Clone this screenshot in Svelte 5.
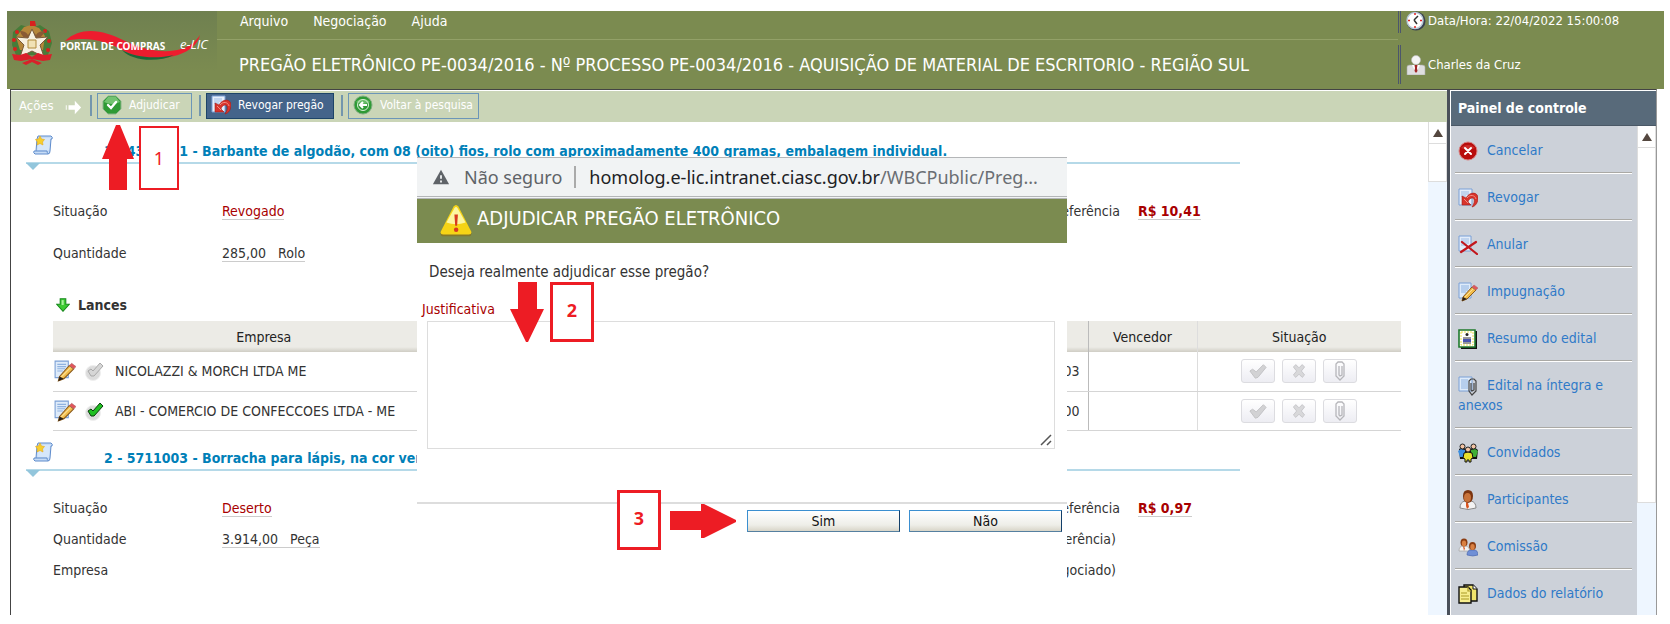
<script>
  const menus = ['Arquivo', 'Negociação', 'Ajuda'];
  const panel = [
    ['cancel', 'Cancelar'],
    ['revoke', 'Revogar'],
    ['annul', 'Anular'],
    ['edit', 'Impugnação'],
    ['summary', 'Resumo do edital'],
    ['attach', 'Edital na íntegra e anexos'],
    ['guests', 'Convidados'],
    ['person', 'Participantes'],
    ['people', 'Comissão'],
    ['report', 'Dados do relatório']
  ];
  const bids = [
    { name: 'NICOLAZZI & MORCH LTDA ME', value: 'R$ 10,03', winner: false },
    { name: 'ABI - COMERCIO DE CONFECCOES LTDA - ME', value: 'R$ 10,00', winner: true }
  ];
  let reason = $state('');
</script>

{#snippet icon(name, size = 20)}
  <svg width={size} height={size} viewBox="0 0 20 20" aria-hidden="true">
    {#if name === 'cancel'}
      <circle cx="10" cy="10" r="9" fill="#b80d0d" stroke="#d98080" />
      <path d="M3 7a8 6 0 0 1 14 0q-7 3-14 0" fill="#d8403a" opacity=".6" />
      <path d="M7 7l6 6M13 7l-6 6" stroke="#fff" stroke-width="2" stroke-linecap="round" />
    {:else if name === 'revoke'}
      <path d="M1 1h13v16H1z" fill="#e6effb" stroke="#7ba0d6" />
      <path d="M3 4h8M3 6h8M3 8h5" stroke="#9dbbe4" />
      <path d="M4 8v9h9l-3-3c1-4 5-5 6-3s0 5-2 8c4-1 6-5 6-9 0-6-8-7-12 0z" fill="#d8342c" stroke="#a41b18" stroke-width=".6" />
      <path d="M9 10c3-4 8-3 9 1M6 11l4 4" fill="none" stroke="#f28d82" />
    {:else if name === 'annul'}
      <path d="M1 1h12v15H1z" fill="#e3edfa" stroke="#7ba0d6" />
      <path d="M3 4h8M3 6h8M3 8h8M3 10h6" stroke="#9dbbe4" />
      <path d="M3 17L18 7M4 7l15 12" stroke="#c2161c" stroke-width="2.2" stroke-linecap="round" />
    {:else if name === 'edit'}
      <path d="M1 1h12v15H1z" fill="#deebfa" stroke="#7ba0d6" />
      <path d="M3 4h8M3 6h8M3 8h7M3 10h5" stroke="#8fb2e0" />
      <path d="M5 15L14 5l4 3-9 9-5 2z" fill="#f2bd4a" stroke="#8a5a1c" />
      <path d="M6.500 15.500L15 7" stroke="#fbe09a" />
      <path d="M4 19l1-4 4 2z" fill="#2b2018" />
      <path d="M14 5l2-2 4 3-2 2z" fill="#e2555a" stroke="#b06a70" stroke-width=".6" />
    {:else if name === 'summary'}
      <path d="M3 2h16v18H3z" fill="#111" />
      <path d="M1 1h16v17H1z" fill="#fff" stroke="#1f7a2c" stroke-width="1.600" />
      <path d="M3 3h12v13H3z" fill="none" stroke="#e9e04a" stroke-dasharray="2 1" />
      <circle cx="9" cy="5.500" r="1.500" fill="#222" />
      <path d="M5 9h8M5 14h8" stroke="#333" />
      <path d="M5 10h8v3H5z" fill="#4a55b0" />
    {:else if name === 'attach'}
      <path d="M1 1h13v14H1z" fill="#deebfa" stroke="#7ba0d6" />
      <path d="M3 4h7M3 6h7M3 8h7M3 10h7M3 12h7" stroke="#8fb2e0" />
      <path d="M11 6v9l3 4 4-4V5l-2-2h-3l-2 2v9M13 7v7l1 1 2-1V7" fill="none" stroke="#444" stroke-width="1.200" />
    {:else if name === 'guests'}
      <path d="M1 6l4-2 3 2 1 10H2zM12 6l4-2 4 3-1 9h-7z" fill="#111" />
      <path d="M0 8l3-2 4 1v7H2z" fill="#3c8fe0" />
      <path d="M13 7l4-1 3 2-2 6h-5z" fill="#3fae35" />
      <circle cx="4.500" cy="3.500" r="2.500" fill="#f3c4a4" stroke="#222" />
      <circle cx="15.500" cy="3.500" r="2.500" fill="#f3c4a4" stroke="#222" />
      <path d="M6 10l4-1 4 1 1 5-2 1v3h-2v-2H9v2H7v-3l-2-1z" fill="#e8e22c" stroke="#111" />
      <circle cx="10" cy="6.500" r="2.500" fill="#f3c4a4" stroke="#222" />
    {:else if name === 'person'}
      <path d="M2 18q0-6 5-7h6q5 1 5 7-8 3-16 0z" fill="#f3f3f3" stroke="#888" />
      <path d="M8 12l2 1 1 4-2 2-1-3z" fill="#d9541e" />
      <path d="M5 6q0-6 5-6t5 6q0 6-5 7-5-1-5-7z" fill="#7c3510" />
      <ellipse cx="9.500" cy="7.500" rx="3.500" ry="4.500" fill="#c9733a" />
    {:else if name === 'people'}
      <path d="M1 14q0-5 4-5h3q3 0 4 5z" fill="#f3f3f3" stroke="#999" stroke-width=".6" />
      <path d="M5 9l1 5 1-3z" fill="#d9541e" />
      <ellipse cx="6" cy="5.500" rx="3.500" ry="4" fill="#8b3d12" />
      <ellipse cx="6" cy="6.500" rx="2.200" ry="3" fill="#d98042" />
      <path d="M9 18q0-5 4-5h3q4 0 4 5-5 2-11 0z" fill="#6f8fd6" stroke="#4560a8" stroke-width=".6" />
      <ellipse cx="14.500" cy="9" rx="3.500" ry="4" fill="#8b3d12" />
      <ellipse cx="14.500" cy="10" rx="2.200" ry="3" fill="#d98042" />
    {:else if name === 'report'}
      <path d="M6 1h9l4 4v12H6z" fill="#efe36c" stroke="#111" stroke-width="1.400" />
      <path d="M15 1v4h4" fill="#fff" stroke="#111" />
      <path d="M1 3h9l3 3v13H1z" fill="#f7ee8e" stroke="#111" stroke-width="1.400" />
      <path d="M10 3v4h3M3 9h6M3 12h8M3 15h8" fill="none" stroke="#a99a26" stroke-width="1.200" />
    {:else if name === 'ok'}
      <path d="M6 1h8l5 5v8l-5 5H6l-5-5V6z" fill="#2f9a35" stroke="#8ab58a" />
      <path d="M6 2h8l4 5q-8 4-16 0z" fill="#8fd48a" opacity=".7" />
      <path d="M6 10l3 3 5-6" fill="none" stroke="#fff" stroke-width="2.400" stroke-linecap="round" />
    {:else if name === 'back'}
      <circle cx="10" cy="10" r="9" fill="#2f9a35" stroke="#7fae80" />
      <path d="M3 7a8 6 0 0 1 14 0q-7 4-14 0" fill="#8fd48a" opacity=".6" />
      <circle cx="10" cy="10" r="5.500" fill="none" stroke="#d9f0d6" />
      <path d="M14 10H7M10 7l-3 3 3 3" fill="none" stroke="#fff" stroke-width="2" />
    {:else if name === 'scroll'}
      <path d="M5 1h13q2 1 1 3h-1L17 16q0 3-2 3H2q-2-1-1-3h2L4 4z" fill="#c7dcf6" stroke="#5f8ccc" />
      <path d="M5.500 3H17l-1 12H4.500z" fill="#d6e7fa" />
      <path d="M3 16h11q0 2 1.500 3" fill="none" stroke="#5f8ccc" />
      <path d="M7 1l1.500 3 3 .5-2 2.500.5 3-3-1.500-3 1.500.5-3-2-2.500 3-.5z" fill="#f7cf2d" stroke="#e6a817" stroke-width=".6" />
    {:else if name === 'clock'}
      <circle cx="10" cy="10" r="9.500" fill="#39414e" />
      <circle cx="9" cy="9.500" r="8" fill="#fff" stroke="#b9cad8" stroke-width="1.500" />
      <path d="M8 9l4-4M8 9l3 4" stroke="#333" stroke-width="1.500" />
      <path d="M9 2v2M9 15v2M2 9.500h2M14 9.500h2" stroke="#e02020" stroke-width="1.500" />
    {:else if name === 'user'}
      <path d="M1 20v-8q0-2 3-2h12q3 0 3 2v8z" fill="#dedee0" stroke="#aaa" stroke-width=".6" />
      <path d="M6 10h8l-4 8z" fill="#fff" />
      <path d="M8.500 10h3l-.5 3 .5 3-1.500 2-1.500-2 .5-3z" fill="#a02525" />
      <circle cx="10" cy="5" r="4.500" fill="#f4f4f4" stroke="#bbb" stroke-width=".6" />
    {:else if name === 'arrow'}
      <path d="M2 8h1v5H2zM5 8h7V3l7 7.500-7 7.500v-5H5z" fill="#fff" />
    {:else if name === 'down'}
      <path d="M6 1h8v8h5l-9 10L1 9h5z" fill="#3ecb34" stroke="#1a8a1e" stroke-width="1.500" />
      <path d="M8 3h3v7H8z" fill="#a9ef9c" />
    {:else if name === 'won' || name === 'lost'}
      <circle cx="9" cy="12" r="7.500" fill="#dcdcdc" stroke="#efefef" />
      <path d="M4 10l3-2 2 2 7-8 3 3-9 10H7z" fill={name === 'won' ? '#1fbf22' : '#d6d6d6'} stroke={name === 'won' ? '#0b3d0c' : '#a9a9a9'} />
    {:else if name === 'gcheck'}
      <path d="M1 10l3-2 4 3 8-8 3 3-9 11-3 1z" fill="#d2d2d4" stroke="#bfbfc2" />
    {:else if name === 'gcross'}
      <path d="M3 5l3-3 4 4 4-4 3 3-4 5 4 5-3 3-4-4-4 4-3-3 4-5z" fill="#d8d8da" stroke="#c0c0c4" />
    {:else if name === 'gclip'}
      <path d="M6 4v11l4 4 4-4V3l-2-2H8L6 3v11M9 5v9l1 1 2-1V5" fill="none" stroke="#b6b6ba" stroke-width="1.300" />
    {:else if name === 'secure'}
      <path d="M10 2l9 16H1z" fill="#5f6368" />
      <path d="M10 8v4M10 14v2" stroke="#f1f3f4" stroke-width="2" />
    {:else if name === 'warning'}
      <path d="M8.500 2q1.500-2.500 3 0L19.500 17q.5 2.500-1.500 2.500H2Q0 19.500.500 17z" fill="#8b6d10" opacity=".6" />
      <path d="M8.500 1q1.500-2 3 0l8 15.500q.5 2-1.500 2H2q-2 0-1.500-2z" fill="#f6d416" />
      <path d="M9 2q1-1.500 2 0l5 9q-6 2-12 0z" fill="#fdf6a0" />
      <path d="M9 6h2.200L10.700 13H9.500z" fill="#d83a20" />
      <circle cx="10.100" cy="15.500" r="1.400" fill="#d83a20" />
    {/if}
  </svg>
{/snippet}

{#snippet up()}
  <span class="up"><svg width="10" height="8" viewBox="0 0 10 8" aria-hidden="true"><path d="M5 0l5 8H0z" fill="#54473f" /></svg></span>
{/snippet}

<div class="page">
  <header>
    <div class="brand">
      <svg width="210" height="78" viewBox="0 0 210 78" role="img" aria-label="Portal de Compras e-LIC">
        <path d="M14 14l-8 7-1 13 4 10h32l4-12-3-12-9-6-8 3z" fill="#3f7a35" opacity=".85" />
        <path d="M17 16l7-2 8 3 6 8-2 14H13L9 26z" fill="#b5863a" />
        <circle cx="10" cy="21" r="2" fill="#d8201e" /><circle cx="38" cy="20" r="2" fill="#d8201e" />
        <circle cx="7" cy="29" r="2" fill="#d8201e" /><circle cx="42" cy="30" r="2" fill="#d8201e" />
        <circle cx="8" cy="38" r="2" fill="#d8201e" /><circle cx="41" cy="39" r="2" fill="#d8201e" />
        <path d="M23 10h5l1 5h-6z" fill="#d8201e" />
        <path d="M13 20q6 0 8 4l4-5 4 5q2-4 9-4-3 7-9 8l-4 3-4-3q-6-1-8-8z" fill="#8a5a34" />
        <path d="M25 18l4 9 12-1-8 8 4 12-12-6-12 6 4-12-8-8 12 1z" fill="#f7f0e0" stroke="#7a5a3a" />
        <path d="M21 29h8v8h-8z" fill="#f1e2b5" stroke="#b08a3a" />
        <path d="M5 43l8 1 6-2 6 4 6-4 6 2 8-1-2 6-7 1-11-2-11 2-7-1z" fill="#d9202a" />
        <path d="M15 52l10-4 10 4-4 2-6-3-6 3z" fill="#d9202a" />
        <path d="M58 30C75 14 98 20 116 29c20 10 42 14 58 9 10-3 15-8 19-14-2 9-10 16-22 20-14 5-38 4-52-3-20-11-36-16-61-11z" fill="#ed1c2e" />
        <path d="M115 39c14 8 34 9 52 5-16 8-43 6-52-5z" fill="#1c6638" />
        <text x="53" y="39" class="brand-name">PORTAL DE COMPRAS</text>
        <text x="173" y="38" class="brand-mark">e-LIC</text>
      </svg>
    </div>
    <div class="titles">
      <nav>
        {#each menus as m}<a href="#menu">{m}</a>{/each}
      </nav>
      <h1>PREGÃO ELETRÔNICO PE-0034/2016 - Nº PROCESSO PE-0034/2016 - AQUISIÇÃO DE MATERIAL DE ESCRITORIO - REGIÃO SUL</h1>
    </div>
    <div class="session">
      <p>{@render icon('clock')}Data/Hora: 22/04/2022 15:00:08</p>
      <p>{@render icon('user')}Charles da Cruz</p>
    </div>
  </header>

  <div class="work">
    <main>
      <div class="toolbar">
        <span class="actions">Ações {@render icon('arrow', 18)}</span>
        <i class="sep"></i>
        <button class="tool adj">{@render icon('ok')}Adjudicar</button>
        <i class="sep"></i>
        <button class="tool dark">{@render icon('revoke')}Revogar pregão</button>
        <i class="sep"></i>
        <button class="tool back">{@render icon('back')}Voltar à pesquisa</button>
      </div>
      <div class="scrollarea">
        <div class="content">
          <section>
            <h2>{@render icon('scroll')}<span>1 - 4310001 - Barbante de algodão, com 08 (oito) fios, rolo com aproximadamente 400 gramas, embalagem individual.</span></h2>
            <dl class="loose">
              <div class="row"><dt>Situação</dt><dd><u class="red">Revogado</u></dd><dt class="ref">Valor de referência</dt><dd><u class="price">R$ 10,41</u></dd></div>
              <div class="row"><dt>Quantidade</dt><dd><u>285,00 &nbsp; Rolo</u></dd></div>
            </dl>
            <h3>{@render icon('down', 14)}Lances</h3>
            <table>
              <thead>
                <tr><th class="company">Empresa</th><th class="value"></th><th class="winner">Vencedor</th><th>Situação</th></tr>
              </thead>
              <tbody>
                {#each bids as b}
                  <tr>
                    <td><div class="bidder">{@render icon('edit', 22)}{@render icon(b.winner ? 'won' : 'lost', 20)}<span>{b.name}</span></div></td>
                    <td class="value">{b.value}</td>
                    <td></td>
                    <td>
                      <div class="marks">
                        <button aria-label="Aceitar">{@render icon('gcheck', 18)}</button>
                        <button aria-label="Recusar">{@render icon('gcross', 16)}</button>
                        <button aria-label="Anexos">{@render icon('gclip', 20)}</button>
                      </div>
                    </td>
                  </tr>
                {/each}
              </tbody>
            </table>
          </section>
          <section>
            <h2>{@render icon('scroll')}<span>2 - 5711003 - Borracha para lápis, na cor verde</span></h2>
            <dl>
              <div class="row"><dt>Situação</dt><dd><u class="red">Deserto</u></dd><dt class="ref">Valor de referência</dt><dd><u class="price">R$ 0,97</u></dd></div>
              <div class="row"><dt>Quantidade</dt><dd><u>3.914,00 &nbsp; Peça</u></dd><dt class="ref total">Total (referência)</dt></div>
              <div class="row"><dt>Empresa</dt><dd></dd><dt class="ref total">Total (negociado)</dt></div>
            </dl>
          </section>
        </div>
        <div class="bar">{@render up()}<span class="thumb"></span></div>
      </div>
    </main>

    <aside>
      <h2 class="panel-title">Painel de controle</h2>
      <div class="scrollarea">
        <ul>
          {#each panel as [key, label]}
            <li><a href="#{key}">{@render icon(key)}{label}</a></li>
          {/each}
        </ul>
        <div class="bar">{@render up()}<span class="thumb tall"></span></div>
      </div>
    </aside>
  </div>

  <div class="dialog" role="dialog" aria-labelledby="dlg-title">
    <div class="address">
      {@render icon('secure', 18)}
      <span class="unsafe">Não seguro</span>
      <span class="url">homolog.e-lic.intranet.ciasc.gov.br<span>/WBCPublic/Preg...</span></span>
    </div>
    <div class="dialog-head">{@render icon('warning', 32)}<h2 id="dlg-title">ADJUDICAR PREGÃO ELETRÔNICO</h2></div>
    <div class="dialog-body">
      <p>Deseja realmente adjudicar esse pregão?</p>
      <label for="reason">Justificativa</label>
      <div class="field">
        <textarea id="reason" bind:value={reason}></textarea>
        <svg class="grip" width="12" height="12" viewBox="0 0 12 12" aria-hidden="true"><path d="M1 11L11 1M7 11l4-4" stroke="#555" stroke-width="1.500" /></svg>
      </div>
    </div>
    <div class="dialog-foot"><button>Sim</button><button>Não</button></div>
  </div>

  <svg class="pin a1" width="32" height="65" viewBox="0 0 32 65" aria-hidden="true"><path d="M14 0h4l14 34H25v31H7V34H0z" /></svg>
  <div class="pin step s1">1</div>
  <svg class="pin a2" width="34" height="60" viewBox="0 0 34 60" aria-hidden="true"><path d="M8 0h19v27h7L18 60h-2L0 27h8z" /></svg>
  <div class="pin step s2">2</div>
  <svg class="pin a3" width="66" height="34" viewBox="0 0 66 34" aria-hidden="true"><path d="M0 7h31V0h3l32 16v2L34 34h-3v-8H0z" /></svg>
  <div class="pin step s3">3</div>
</div>

<style>
  :global(body) { margin: 0; background: #fff; }
  .page, .page * { box-sizing: border-box; }
  .page {
    position: relative; display: flex; flex-direction: column; height: 100vh; overflow: hidden;
    padding: 11px 6px 9px 7px; color: #333;
    font: 14px/20px "DejaVu Sans Condensed", "Noto Sans", sans-serif;
  }
  h1, h2, h3, p, dl, dd, ul { margin: 0; padding: 0; }
  svg { display: block; flex: none; }
  a { color: inherit; text-decoration: none; }
  button { font: inherit; padding: 0; margin: 0; }

  header { display: flex; flex: none; height: 78px; background: #7b8b50; color: #fff; overflow: hidden; }
  .brand { width: 210px; background: linear-gradient(#6f8050, #7b8b50 60px); }
  .brand-name { font: bold 10px "Noto Sans", sans-serif; fill: #fff; }
  .brand-mark { font: italic 13px "Open Sans", sans-serif; fill: #fff; }
  .titles { flex: 1; min-width: 0; }
  nav { display: flex; gap: 25px; height: 29px; padding-left: 23px; border-bottom: 1px solid #93a168; }
  h1 { padding-left: 22px; font-size: 18px; line-height: 50px; font-weight: 400; white-space: nowrap; }
  .session { display: flex; flex-direction: column; gap: 12px; width: 266px; font-size: 13px; }
  .session p { display: flex; align-items: center; gap: 2px; height: 39px; padding-left: 5px; border-left: 3px double #4c566c; }
  .session p:first-child { height: 22px; padding-bottom: 3px; }

  .work { display: flex; flex: 1; min-height: 0; margin: 0 7px 0 3px; border: 1px solid #444; border-bottom: 0; border-right-color: #999; }
  main { display: flex; flex-direction: column; flex: 1; min-width: 0; padding-top: 1px; }
  .toolbar { display: flex; flex: none; align-items: center; height: 31px; padding: 0 0 2px 8px; background: #cad5b7; color: #fff; font-size: 13px; }
  .actions { display: flex; align-items: end; gap: 10px; width: 71px; }
  .sep { width: 3px; height: 21px; margin: 0 4px 0 0; border-left: 2px solid #7396ad; }
  .tool { display: flex; align-items: center; gap: 7px; height: 26px; padding: 0 0 2px 4px; border: 1px solid #6c96b8; background: transparent; color: #fff; font-size: 12px; white-space: nowrap; }
  .adj { width: 95px; margin-right: 7px; }
  .dark { width: 128px; margin-right: 7px; background: #44648a; border-color: #1d4468; }
  .back { width: 131px; }
  .scrollarea { display: flex; flex: 1; min-height: 0; }
  .content { flex: 1; min-width: 0; padding: 13px 0 0 15px; overflow: hidden; }
  .bar { flex: none; width: 19px; background: #eef6ff; }
  .up { display: flex; align-items: center; justify-content: center; height: 22px; background: #fff; border: 1px solid #ddd; border-top: 0; }
  .thumb { display: block; height: 38px; background: #fff; border: 1px solid #ddd; border-top: 0; }
  .thumb.tall { height: 355px; }

  section h2 {
    position: relative; display: flex; gap: 51px; width: 1214px; height: 29px; padding-left: 7px;
    border-bottom: 2px solid #b5d9e8; color: #0080b8; font-size: 14px; line-height: 32px; white-space: nowrap;
  }
  section h2::after { content: ""; position: absolute; left: 0; top: 28px; border: solid transparent; border-width: 7px 7px 0; border-top-color: #93c6dc; }
  dl { padding: 22px 0 0 27px; }
  .row { display: grid; grid-template-columns: 169px 795px 121px 1fr; height: 31px; align-items: center; white-space: nowrap; }
  .loose { padding-top: 26px; }
  .loose .row { height: 42px; }
  .ref { justify-self: end; padding-right: 18px; }
  .total { padding-right: 22px; }
  u { text-decoration: none; border-bottom: 1px solid #ccc; }
  .red { color: #a80000; }
  .price { color: #a80000; font-weight: 700; }
  h3 { display: flex; align-items: center; gap: 8px; margin: 21px 0 6px 30px; font-size: 14px; line-height: 20px; }
  table { width: 1348px; margin: 0 0 11px 27px; border-collapse: collapse; table-layout: fixed; }
  th { height: 31px; padding: 0; font-weight: 400; color: #222; background: linear-gradient(#ecebe6 26px, #cfcdc4); }
  td { height: 39px; padding: 0; border-bottom: 1px solid #d5d5d5; }
  th + th, td + td { border-left: 1px solid #ddd; }
  .company { width: 422px; }
  .value { width: 613px; padding-right: 8px; text-align: right; }
  .winner { width: 109px; }
  th.winner, td.value + td { border-left-color: #bbb; }
  .bidder { display: flex; align-items: center; gap: 8px; padding-left: 1px; white-space: nowrap; }
  .bidder svg:first-child { align-self: flex-start; }
  .bidder span { padding: 0 0 0 3px; }
  .marks { display: flex; justify-content: center; gap: 7px; }
  .marks button { display: flex; align-items: center; justify-content: center; width: 34px; height: 24px; border: 1px solid #dcdce0; border-radius: 3px; background: linear-gradient(#fff, #ededf3); }

  aside { display: flex; flex-direction: column; width: 209px; border-left: 3px solid #4a505a; padding-top: 1px; }
  .panel-title { height: 35px; padding-left: 7px; margin-left: 1px; background: #586a7a; border-bottom: 1px solid #4a5866; color: #fff; font-size: 14px; line-height: 35px; }
  ul { flex: 1; list-style: none; overflow: hidden; margin-left: 1px; padding: 0 5px 0 4px; background: #ccd1d9; color: #2f7ac8; }
  li { padding: 14px 0 12px 3px; border-bottom: 1px solid #aaa9a5; box-shadow: 0 1px #fff; line-height: 20px; }
  li svg { display: inline-block; vertical-align: middle; margin: -2px 9px -2px 0; }

  .dialog { position: absolute; left: 417px; top: 157px; width: 650px; height: 440px; background: #fff; color: #333; }
  .address { display: flex; align-items: center; height: 42px; padding-left: 15px; background: #f1f3f4; border-top: 1px solid #b4b6b8; border-bottom: 3px double #b4b6b8; font: 18px/30px "Noto Sans", sans-serif; white-space: nowrap; }
  .unsafe { margin-left: 14px; padding-right: 12px; color: #5f6368; }
  .url { padding-left: 13px; border-left: 2px solid #aaa; line-height: 22px; color: #202124; }
  .url span { color: #6a6e73; }
  .dialog-head { display: flex; align-items: center; gap: 5px; height: 44px; padding-left: 23px; background: #7b8b50; color: #fff; }
  .dialog-head h2 { font-size: 20px; line-height: 24px; font-weight: 400; padding-bottom: 6px; }
  .dialog-body { padding: 19px 12px 0 10px; height: 261px; border-bottom: 2px solid #ddd; }
  .dialog-body p { padding-left: 2px; font-size: 15px; }
  .dialog-body label { display: block; margin: 17px 0 2px -5px; color: #a80000; }
  .field { position: relative; }
  textarea { display: block; width: 100%; height: 128px; border: 1px solid #ddd; resize: none; font: inherit; }
  .grip { position: absolute; right: 3px; bottom: 3px; }
  .dialog-foot { display: flex; justify-content: flex-end; gap: 9px; padding: 6px 5px 0 0; }
  .dialog-foot button { width: 153px; height: 22px; border: 1px solid #3b8fd0; border-right-color: #123f6a; border-bottom-color: #5580a0; background: linear-gradient(#fff, #eeeee8 70%, #d8d5c8); color: #111; }

  .pin { position: absolute; }
  svg.pin { fill: #ed1c24; }
  .step { display: flex; justify-content: center; border: 3px solid #ed1c24; background: #fff; color: #ed1c24; font: bold 18px/50px "Noto Sans", sans-serif; width: 44px; height: 60px; }
  .a1 { left: 102px; top: 125px; }
  .s1 { left: 139px; top: 126px; width: 40px; height: 64px; border-width: 2px; font-weight: 400; line-height: 60px; }
  .a2 { left: 510px; top: 282px; }
  .s2 { left: 550px; top: 282px; }
  .a3 { left: 670px; top: 504px; }
  .s3 { left: 617px; top: 490px; }
</style>
